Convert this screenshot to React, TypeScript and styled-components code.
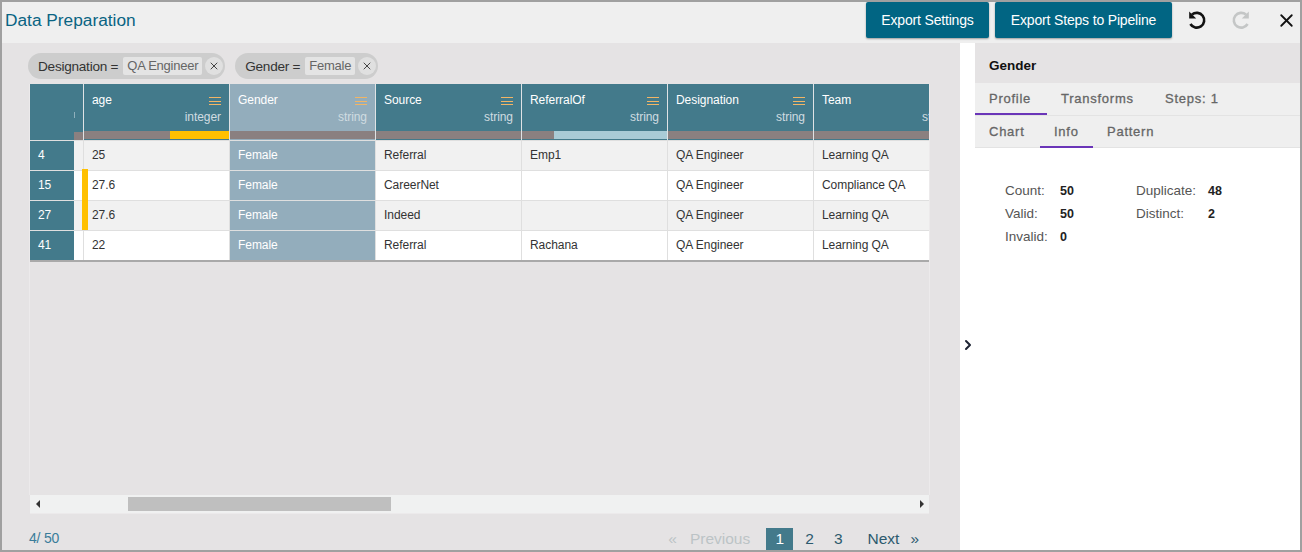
import React from 'react'
import styled, { createGlobalStyle } from 'styled-components'
import { ChevronRight, X } from 'lucide-react'

const columns = [
   { name: 'age', type: 'integer', bar: { start: 86, color: '#ffc000' } },
   { name: 'Gender', type: 'string', selected: true },
   { name: 'Source', type: 'string' },
   { name: 'ReferralOf', type: 'string', bar: { start: 32, color: '#a9cbd6' } },
   { name: 'Designation', type: 'string' },
   { name: 'Team', type: 'string' },
]

const rows = [
   { id: '4', flagged: false, cells: ['25', 'Female', 'Referral', 'Emp1', 'QA Engineer', 'Learning QA'] },
   { id: '15', flagged: true, cells: ['27.6', 'Female', 'CareerNet', '', 'QA Engineer', 'Compliance QA'] },
   { id: '27', flagged: true, cells: ['27.6', 'Female', 'Indeed', '', 'QA Engineer', 'Learning QA'] },
   { id: '41', flagged: false, cells: ['22', 'Female', 'Referral', 'Rachana', 'QA Engineer', 'Learning QA'] },
]

const stats = [
   [['Count:', '50'], ['Duplicate:', '48']],
   [['Valid:', '50'], ['Distinct:', '2']],
   [['Invalid:', '0']],
]

const UndoIcon = ({ muted }: { muted?: boolean }) => (
   <svg width='20' height='20' viewBox='0 0 20 20' fill='none' style={muted ? { transform: 'scaleX(-1)' } : undefined}>
      <path
         d='M5 4.6 A7.4 7.4 0 1 1 3.4 14'
         stroke={muted ? '#c4c6c6' : '#111'}
         strokeWidth='2.6'
      />
      <path d='M2.2 1.6 V8.6 H9.2 Z' fill={muted ? '#c4c6c6' : '#111'} />
   </svg>
)

const App = () => (
   <Frame>
      <GlobalStyle />
      <Header>
         <Title>Data Preparation</Title>
         <Actions>
            <ExportButton $width={123}>Export Settings</ExportButton>
            <ExportButton $width={177}>Export Steps to Pipeline</ExportButton>
            <IconButton><UndoIcon /></IconButton>
            <IconButton><UndoIcon muted /></IconButton>
            <CloseButton><X size={21} strokeWidth={2.1} color='#111' /></CloseButton>
         </Actions>
      </Header>

      <Body>
         <Workspace>
            <Filters>
               <Chip>
                  Designation =<ChipValue>QA Engineer</ChipValue>
                  <ChipClose><X size={12} strokeWidth={2} /></ChipClose>
               </Chip>
               <Chip>
                  Gender =<ChipValue>Female</ChipValue>
                  <ChipClose><X size={12} strokeWidth={2} /></ChipClose>
               </Chip>
            </Filters>

            <Grid>
               <Table>
                  <HeadRow>
                     <CornerCell><CornerBar /></CornerCell>
                     {columns.map(col => (
                        <HeadCell key={col.name} $selected={col.selected}>
                           <HeadTop>
                              <HeadName>
                                 {col.name}
                                 <Burger><span /><span /><span /></Burger>
                              </HeadName>
                              <HeadType>{col.type}</HeadType>
                           </HeadTop>
                           <ProfileBar>
                              {col.bar && <ProfileFill $start={col.bar.start} $color={col.bar.color} />}
                           </ProfileBar>
                        </HeadCell>
                     ))}
                  </HeadRow>

                  {rows.map((row, i) => (
                     <Row key={row.id} $odd={i % 2 === 0}>
                        <RowId><RowNumber>{row.id}</RowNumber></RowId>
                        {row.flagged && <Flag />}
                        {row.cells.map((cell, c) => (
                           <Cell key={c} $selected={c === 1}>{cell}</Cell>
                        ))}
                     </Row>
                  ))}
               </Table>
            </Grid>

            <ScrollBar>
               <ScrollLeft />
               <ScrollTrack><ScrollThumb /></ScrollTrack>
               <ScrollRight />
            </ScrollBar>

            <Footer>
               <Count>4/ 50</Count>
               <Pager>
                  <PageMuted>«</PageMuted>
                  <PageMuted>Previous</PageMuted>
                  <PageCurrent>1</PageCurrent>
                  <PageLink>2</PageLink>
                  <PageLink>3</PageLink>
                  <PageNext>Next</PageNext>
                  <PageLink>»</PageLink>
               </Pager>
            </Footer>
         </Workspace>

         <Gutter><ChevronRight size={16} strokeWidth={3} color='#1d2333' /></Gutter>

         <Panel>
            <PanelTitle>Gender</PanelTitle>
            <Tabs>
               <Tab $active $width={72}>Profile</Tab>
               <Tab $width={104}>Transforms</Tab>
               <Tab $width={72}>Steps: 1</Tab>
            </Tabs>
            <SubTabs>
               <Tab $width={65}>Chart</Tab>
               <Tab $active $width={53}>Info</Tab>
               <Tab $width={76}>Pattern</Tab>
            </SubTabs>
            <Stats>
               {stats.map((line, i) => (
                  <StatLine key={i}>
                     {line.map(([label, value]) => (
                        <Stat key={label}>
                           <StatLabel>{label}</StatLabel>
                           <StatValue>{value}</StatValue>
                        </Stat>
                     ))}
                  </StatLine>
               ))}
            </Stats>
         </Panel>
      </Body>
   </Frame>
)

const GlobalStyle = createGlobalStyle`
   html, body {
      margin: 0;
      padding: 0;
      background: #fff;
   }

   * {
      box-sizing: border-box;
   }
`

const Frame = styled.div`
   width: 1302px;
   height: 552px;
   border: 2px solid #a0a0a0;
   display: flex;
   flex-direction: column;
   overflow: hidden;
   font-family: 'Liberation Sans', Arial, sans-serif;
`

const Header = styled.header`
   height: 41px;
   flex: none;
   background: #efefef;
   display: flex;
   justify-content: space-between;
   padding-left: 3px;
`

const Title = styled.h1`
   margin: 0;
   font-size: 17.3px;
   font-weight: 400;
   line-height: 36px;
   color: #0a6483;
`

const Actions = styled.div`
   display: flex;
   align-items: flex-start;
`

const ExportButton = styled.button<{ $width: number }>`
   width: ${p => p.$width}px;
   height: 36px;
   margin-right: 6px;
   padding: 0;
   border: 0;
   border-radius: 2px;
   background: #016583;
   box-shadow: 0 1px 2px rgba(0, 0, 0, 0.35);
   color: #fff;
   font: 14px 'Liberation Sans', Arial, sans-serif;
   letter-spacing: -0.17px;
`

const IconButton = styled.div`
   width: 44px;
   height: 36px;
   display: flex;
   align-items: center;
   justify-content: center;

   &:first-of-type {
      margin-left: -3px;
   }
`

const CloseButton = styled(IconButton)`
   margin-left: 1px;
   margin-right: -8px;
`

const Body = styled.main`
   flex: 1;
   min-height: 0;
   display: flex;
`

const Workspace = styled.section`
   width: 958px;
   flex: none;
   background: #e5e3e4;
   padding: 10px 31px 0 28px;
   display: flex;
   flex-direction: column;
`

const Filters = styled.div`
   display: flex;
   gap: 10px;
   margin-left: -2px;
`

const Chip = styled.div`
   height: 26px;
   display: flex;
   align-items: center;
   padding: 0 2px 0 10px;
   border-radius: 13px;
   background: #cdcdcd;
   color: #333;
   font-size: 13.6px;
   letter-spacing: -0.25px;
`

const ChipValue = styled.span`
   height: 18px;
   line-height: 18px;
   margin-left: 5px;
   padding: 0 4px;
   border-radius: 2px;
   background: #e4e4e4;
   color: #666;
   font-size: 13px;
`

const ChipClose = styled.span`
   width: 18px;
   height: 18px;
   margin-left: 3px;
   border-radius: 50%;
   background: #e0e0e0;
   color: #444;
   display: flex;
   align-items: center;
   justify-content: center;
`

const Grid = styled.div`
   flex: none;
   height: 411px;
   margin-top: 5px;
   overflow: hidden;
   box-shadow: -1px 0 0 #eceaeb, 1px 0 0 #eceaeb;
`

const Table = styled.div`
   width: 930px;
   box-shadow: 0 2px 0 #a9a9a9;
   clip-path: inset(0 0 -3px 0);
`

const HeadRow = styled.div`
   display: flex;
   height: 56px;
   background: #fff;
`

const CornerCell = styled.div`
   width: 54px;
   flex: none;
   background: #437a8b;
   position: relative;
   border-right: 1px solid #dfe3e5;

   &::before {
      content: '';
      position: absolute;
      left: 44px;
      top: 28px;
      width: 1px;
      height: 6px;
      background: #8fb0bc;
   }
`

const CornerBar = styled.div`
   position: absolute;
   right: 0;
   bottom: 0;
   width: 9px;
   height: 8px;
   background: #8a8080;
`

const HeadCell = styled.div<{ $selected?: boolean }>`
   width: 146px;
   flex: none;
   display: flex;
   flex-direction: column;
   border-right: 1px solid #dfe3e5;
   color: #fff;
   background: ${p => (p.$selected ? '#93adbc' : '#437a8b')};
`

const HeadTop = styled.div`
   height: 47px;
   padding: 9px 8px 0;
   font-size: 12px;
   letter-spacing: -0.05px;
`

const HeadName = styled.div`
   display: flex;
   justify-content: space-between;
   height: 16px;
   line-height: 14px;
`

const Burger = styled.div`
   width: 12px;
   margin-top: 4px;
   display: flex;
   flex-direction: column;
   gap: 2.5px;

   span {
      height: 1px;
      background: #f2b565;
   }
`

const HeadType = styled.div`
   margin-top: 1px;
   text-align: right;
   font-size: 12px;
   line-height: 14px;
   color: #d0dce1;
`

const ProfileBar = styled.div`
   height: 8px;
   position: relative;
   background: #8a8080;
`

const ProfileFill = styled.div<{ $start: number; $color: string }>`
   position: absolute;
   top: 0;
   right: 0;
   bottom: 0;
   left: ${p => p.$start}px;
   background: ${p => p.$color};
`

const Row = styled.div<{ $odd: boolean }>`
   display: flex;
   position: relative;
   height: 30px;
   border-top: 1px solid #dfdfdf;
   background: ${p => (p.$odd ? '#f1f1f1' : '#fff')};
   font-size: 12px;
   letter-spacing: -0.05px;
   line-height: 28px;
   color: #333;
`

const RowId = styled.div`
   width: 54px;
   flex: none;
   border-right: 1px solid #dfdfdf;
`

const RowNumber = styled.div`
   width: 44px;
   height: 100%;
   padding-left: 8px;
   background: #437a8b;
   color: #fff;
`

const Flag = styled.div`
   position: absolute;
   left: 52px;
   top: -2px;
   width: 6px;
   height: 33px;
   background: #ffc000;
`

const Cell = styled.div<{ $selected?: boolean }>`
   width: 146px;
   flex: none;
   padding-left: 8px;
   border-right: 1px solid #dfdfdf;
   background: ${p => (p.$selected ? '#93adbc' : 'transparent')};
   color: ${p => (p.$selected ? '#fff' : '#333')};
`

const ScrollBar = styled.div`
   height: 18px;
   flex: none;
   display: flex;
   align-items: center;
   background: #f0f1f1;
   box-shadow: 0 1px 0 #eceaeb;
`

const ScrollTrack = styled.div`
   flex: 1;
   height: 100%;
   padding: 2px 0 2px 80px;
`

const ScrollThumb = styled.div`
   width: 263px;
   height: 100%;
   background: #bfbfbf;
`

const ScrollLeft = styled.span`
   width: 0;
   height: 0;
   margin-left: 6px;
   margin-right: 8px;
   border-style: solid;
   border-width: 4px 4px 4px 0;
   border-color: transparent #333 transparent transparent;
`

const ScrollRight = styled.span`
   width: 0;
   height: 0;
   margin-right: 5px;
   border-style: solid;
   border-width: 4px 0 4px 4px;
   border-color: transparent transparent transparent #333;
`

const Footer = styled.div`
   flex: 1;
   display: flex;
   justify-content: space-between;
   align-items: flex-end;
   margin-left: -1px;
`

const Count = styled.span`
   font-size: 14px;
   line-height: 16px;
   margin-bottom: 4px;
   letter-spacing: -0.2px;
   color: #3a7c9a;
`

const Pager = styled.div`
   display: flex;
   align-items: center;
   height: 22px;
   font-size: 15.5px;
`

const PageLink = styled.span`
   padding: 0 10px;
   color: #2c5a6e;
`

const PageMuted = styled.span`
   padding-right: 13px;
   color: #bcc3c6;
`

const PageCurrent = styled.span`
   width: 27px;
   height: 22px;
   margin-left: 3px;
   margin-right: 2px;
   background: #437a8b;
   color: #fff;
   text-align: center;
   line-height: 22px;
`

const PageNext = styled(PageLink)`
   padding: 0 1px 0 15px;
`

const Gutter = styled.div`
   width: 15px;
   flex: none;
   padding-top: 294px;
   background: #fff;
`

const Panel = styled.aside`
   flex: 1;
   background: #fff;
`

const PanelTitle = styled.div`
   height: 40px;
   padding-left: 14px;
   background: #e5e3e4;
   color: #111;
   font-size: 13.5px;
   font-weight: 700;
   line-height: 46px;
`

const Tabs = styled.div`
   display: flex;
   height: 33px;
   background: #efefef;
   border-bottom: 1px solid #e3e3e3;
`

const SubTabs = styled(Tabs)`
   height: 32px;
`

const Tab = styled.div<{ $active?: boolean; $width: number }>`
   width: ${p => p.$width}px;
   height: 32px;
   padding-left: 14px;
   font-size: 13px;
   font-weight: 400;
   line-height: 32px;
   letter-spacing: 0.75px;
   color: #666;
   -webkit-text-stroke: 0.3px #666;
   border-bottom: 2px solid ${p => (p.$active ? '#6a35b8' : 'transparent')};
`

const Stats = styled.div`
   padding: 31px 0 0 30px;
   font-size: 13.5px;
`

const StatLine = styled.div`
   display: flex;
   height: 23px;
   line-height: 23px;
`

const Stat = styled.div`
   width: 131px;
   display: flex;
   align-items: baseline;

   & + & > span:first-child {
      width: 72px;
   }
`

const StatLabel = styled.span`
   width: 55px;
   color: #555;
`

const StatValue = styled.span`
   color: #222;
   font-weight: 700;
   font-size: 12.5px;
`

export default App
